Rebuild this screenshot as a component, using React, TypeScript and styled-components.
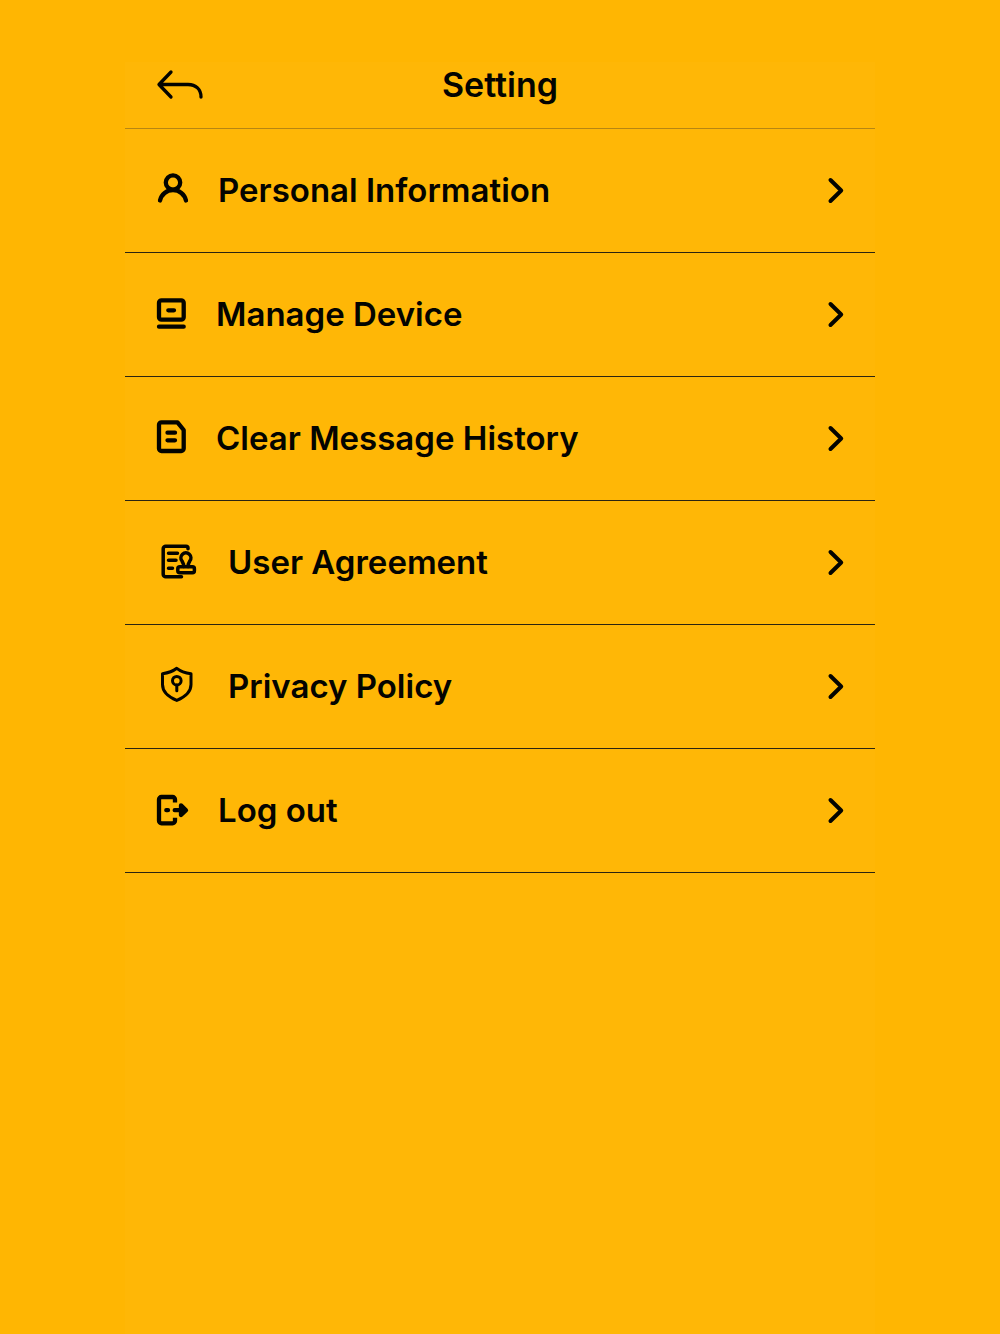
import React from 'react';
import styled, { createGlobalStyle } from 'styled-components';

const GlobalStyle = createGlobalStyle`
  *, *::before, *::after { box-sizing: border-box; }
  body {
    margin: 0;
    background: #ffb602;
    color: #040400;
    font-family: Inter, "Liberation Sans", sans-serif;
  }
`;

const Page = styled.div`
  display: flex;
  justify-content: center;
  min-height: 100vh;
  padding-top: 62px;
`;

const Panel = styled.main`
  width: 75%;
  background: #ffb706;
`;

const Header = styled.header`
  display: grid;
  grid-template-columns: 1fr auto 1fr;
  align-items: center;
  padding: 0 31px 20px;
  border-bottom: 1px solid #b78612;
`;

const BackButton = styled.button`
  display: flex;
  justify-self: start;
  padding: 0;
  border: 0;
  background: none;
  color: inherit;
  cursor: pointer;
`;

const Title = styled.h1`
  margin: 0;
  font-size: 34px;
  line-height: 46px;
  font-weight: 600;
  font-variant-ligatures: none;
`;

const List = styled.ul`
  margin: 0;
  padding: 0;
  list-style: none;
`;

const Item = styled.li`
  border-bottom: 1px solid #2b2410;
`;

const RowButton = styled.button`
  display: flex;
  align-items: center;
  gap: 30px;
  width: 100%;
  height: 123px;
  padding: 0 31px;
  border: 0;
  background: none;
  color: inherit;
  font: inherit;
  text-align: left;
  cursor: pointer;
`;

const Label = styled.span`
  flex: 1;
  padding-bottom: 2px;
  font-size: 33px;
  line-height: 46px;
  font-weight: 600;
`;

const Glyph = styled.svg<{ $weight: number }>`
  flex: none;
  overflow: visible;
  fill: none;
  stroke: currentColor;
  stroke-width: ${(p) => p.$weight};
  stroke-linecap: round;
  stroke-linejoin: round;
`;

type Entry = { label: string; width: number; weight: number; art: React.ReactNode };

const entries: Entry[] = [
  {
    label: 'Personal Information',
    width: 32,
    weight: 4.3,
    art: (
      <>
        <circle cx="17" cy="11.5" r="7.2" />
        <path d="M4 29.5A13.3 13.3 0 0 1 30 29.5" />
      </>
    ),
  },
  {
    label: 'Manage Device',
    width: 30,
    weight: 4.3,
    art: (
      <>
        <rect x="3" y="5.3" width="24.7" height="19.4" rx="2.5" />
        <path d="M12.3 15.3H18M3 31.7H27.7" />
      </>
    ),
  },
  {
    label: 'Clear Message History',
    width: 30,
    weight: 4.3,
    art: (
      <>
        <path d="M5.5 3.3H21.5L27.7 11V29.5A2.5 2.5 0 0 1 25.2 32H5.5A2.5 2.5 0 0 1 3 29.5V5.8A2.5 2.5 0 0 1 5.5 3.3Z" />
        <path d="M11.5 13.7H19M11.5 21.3H19" />
      </>
    ),
  },
  {
    label: 'User Agreement',
    width: 42,
    weight: 3.5,
    art: (
      <>
        <path d="M32 5.8V5.3A2 2 0 0 0 30 3.3H9.7A2.5 2.5 0 0 0 7.2 5.8V31.2A2.5 2.5 0 0 0 9.7 33.7H25.5" />
        <path d="M12.5 10.3H21.5M12.5 17.3H20M12.5 25.3H16.5" />
        <path d="M27.6 23.6C28 21.2 27.2 20 26 18A5 5 0 1 1 33.8 18C32.5 20 31.8 21.2 32.2 23.6" />
        <rect x="21.8" y="23.8" width="16.6" height="6" rx="2" />
      </>
    ),
  },
  {
    label: 'Privacy Policy',
    width: 42,
    weight: 3,
    art: (
      <>
        <path d="M20.8 1.3C17 4.3 12 6 6.5 6.7V17.5C6.5 25.5 12.5 30 20.8 33.4C29 30 35 25.5 35 17.5V6.7C29.5 6 24.5 4.3 20.8 1.3Z" />
        <circle cx="20.8" cy="13.7" r="4.3" />
        <path d="M20.8 18V23.8" />
      </>
    ),
  },
  {
    label: 'Log out',
    width: 32,
    weight: 4.3,
    art: (
      <>
        <path d="M19 11.5V8.5A2.5 2.5 0 0 0 16.5 6H5.5A2.5 2.5 0 0 0 3 8.5V29.8A2.5 2.5 0 0 0 5.5 32.3H16.5A2.5 2.5 0 0 0 19 29.8V26.8" strokeLinecap="butt" />
        <path d="M10.3 19.2H12M18.7 19.2H29" />
        <path d="M25 14.4L30 19.2L25 24Z" fill="currentColor" />
      </>
    ),
  },
];

export default function App() {
  return (
    <>
      <GlobalStyle />
      <Page>
        <Panel>
          <Header>
            <BackButton type="button" aria-label="Back">
              <Glyph $weight={3.3} width="48" height="32" viewBox="0 0 48 32" aria-hidden="true">
                <path d="M15 3L3 15.5L15 28M3 15.5H32C40 15.5 45 20.5 45 28" />
              </Glyph>
            </BackButton>
            <Title>Setting</Title>
          </Header>
          <nav aria-label="Settings">
            <List>
              {entries.map(({ label, width, weight, art }) => (
                <Item key={label}>
                  <RowButton type="button">
                    <Glyph
                      $weight={weight}
                      width={width}
                      height="39"
                      viewBox={`0 0 ${width} 39`}
                      aria-hidden="true"
                    >
                      {art}
                    </Glyph>
                    <Label>{label}</Label>
                    <Glyph $weight={4} width="16" height="27" viewBox="0 0 16 27" aria-hidden="true">
                      <path d="M2.5 3L13.2 13.5L2.5 24" />
                    </Glyph>
                  </RowButton>
                </Item>
              ))}
            </List>
          </nav>
        </Panel>
      </Page>
    </>
  );
}
